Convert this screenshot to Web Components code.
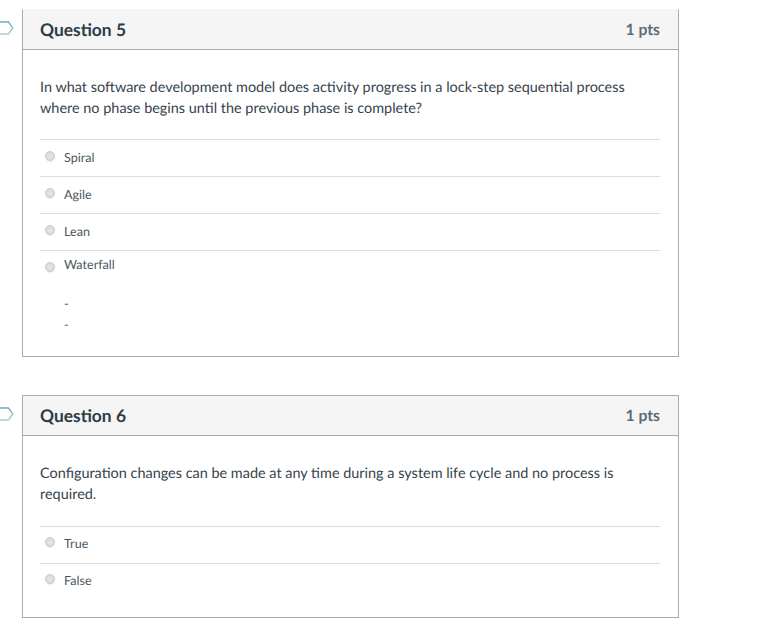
<!DOCTYPE html>
<html>
<head>
<meta charset="utf-8">
<style>
	html, body {
		margin: 0;
		padding: 0;
		background: #fff;
	}
	body {
		font-family: Lato, "Noto Sans", sans-serif;
		color: #2d3b45;
		text-rendering: geometricPrecision;
	}
</style>
</head>
<body>
<quiz-page>
	<quiz-question name="Question 5" points="1 pts">
		<span slot="text">In what software development model does activity progress in a lock-step sequential process where no phase begins until the previous phase is complete?</span>
		<quiz-answer>Spiral</quiz-answer>
		<quiz-answer>Agile</quiz-answer>
		<quiz-answer>Lean</quiz-answer>
		<quiz-answer tall>Waterfall
			<div class="dashes">-</div>
			<div class="dashes">-</div>
		</quiz-answer>
	</quiz-question>
	<quiz-question name="Question 6" points="1 pts" style="--text-gap: 21px; --row-top: 9px; --end-gap: 17px">
		<span slot="text">Configuration changes can be made at any time during a system life cycle and no process is required.</span>
		<quiz-answer>True</quiz-answer>
		<quiz-answer>False</quiz-answer>
	</quiz-question>
</quiz-page>

<template id="page-template">
	<style>
		:host {
			display: flex;
			flex-direction: column;
			gap: 38px;
			padding: 9px 84px 0 22px;
			width: 657px;
		}
	</style>
	<slot></slot>
</template>

<template id="question-template">
	<style>
		:host {
			display: block;
			position: relative;
			box-sizing: border-box;
			border: 1px solid #aaa;
			background: #fff;
		}
		:host([first]) {
			border-top-color: #f5f5f5;
		}
		header {
			display: flex;
			justify-content: space-between;
			align-items: center;
			box-sizing: border-box;
			height: 40px;
			padding: 0 18px 0 17px;
			background: #f5f5f5;
			border-bottom: 1px solid #aaa;
		}
		h2 {
			margin: 0;
			font-size: 17.4px;
			font-weight: 700;
			line-height: 24px;
			color: #2d3b45;
		}
		.pts {
			font-size: 15.7px;
			font-weight: 700;
			color: #5f6b73;
		}
		.body {
			padding: 27px 18px 0 17px;
		}
		.text {
			font-size: 14.45px;
			line-height: 21px;
			color: #36434c;
			padding-bottom: var(--text-gap, 20px);
		}
		.answers {
			padding-bottom: var(--end-gap, 18px);
		}
		svg {
			position: absolute;
			left: -23px;
			top: 11px;
		}
	</style>
	<svg width="14" height="14" viewBox="0 0 14 14">
		<defs>
			<linearGradient id="flag-edge" gradientUnits="userSpaceOnUse" x1="0" y1="0" x2="0" y2="14">
				<stop offset="0" stop-color="#6fa5bd"/>
				<stop offset="1" stop-color="#b7ccd9"/>
			</linearGradient>
		</defs>
		<path d="M-2 1 H8.5 L12.8 7 L8.5 13 H-2" fill="#fff" stroke="url(#flag-edge)" stroke-width="1.3"/>
	</svg>
	<header>
		<h2></h2>
		<span class="pts"></span>
	</header>
	<div class="body">
		<div class="text"><slot name="text"></slot></div>
		<div class="answers"><slot></slot></div>
	</div>
</template>

<template id="answer-template">
	<style>
		:host {
			display: block;
			box-sizing: border-box;
			height: 37px;
			border-top: 1px solid #ddd;
		}
		:host([tall]) {
			height: 88px;
		}
		.row {
			display: flex;
			gap: 9px;
			padding: var(--row-top, 10px) 0 0 5px;
		}
		.dot {
			flex: none;
			box-sizing: border-box;
			width: 10px;
			height: 10px;
			margin-top: 1px;
			border-radius: 50%;
			background: radial-gradient(circle at 50% 55%, #e6e6e6, #d6d6d6);
			border: 1px solid #c8c8c8;
			box-shadow: 0 1px 1px #ececec;
		}
		:host([tall]) .dot {
			margin-top: 5px;
		}
		:host([tall]) .row {
			padding-top: 6px;
		}
		.label {
			font-size: 12.6px;
			line-height: 15px;
			color: #4c5860;
		}
		::slotted(.dashes) {
			line-height: 21px;
		}
		::slotted(.dashes:first-of-type) {
			margin-top: 21px;
		}
	</style>
	<div class="row">
		<span class="dot"></span>
		<span class="label"><slot></slot></span>
	</div>
</template>

<script>
	function fromTemplate(el, id) {
		const shadow = el.attachShadow({ mode: "open" });
		shadow.append(document.getElementById(id).content.cloneNode(true));
		return shadow;
	}

	class QuizPage extends HTMLElement {
		constructor() {
			super();
			fromTemplate(this, "page-template");
		}
	}

	class QuizQuestion extends HTMLElement {
		constructor() {
			super();
			this._shadow = fromTemplate(this, "question-template");
		}

		connectedCallback() {
			this._shadow.querySelector("h2").textContent = this.getAttribute("name");
			this._shadow.querySelector(".pts").textContent = this.getAttribute("points");
			if (!this.previousElementSibling) this.setAttribute("first", "");
		}
	}

	class QuizAnswer extends HTMLElement {
		constructor() {
			super();
			fromTemplate(this, "answer-template");
		}
	}

	customElements.define("quiz-page", QuizPage);
	customElements.define("quiz-question", QuizQuestion);
	customElements.define("quiz-answer", QuizAnswer);
</script>
</body>
</html>
